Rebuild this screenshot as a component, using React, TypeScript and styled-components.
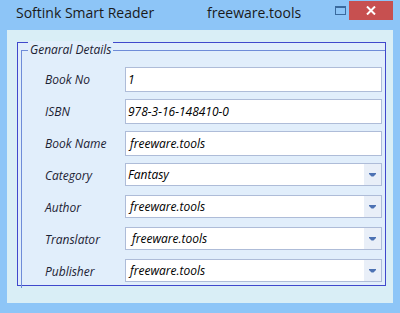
import React from "react";
import styled, { createGlobalStyle } from "styled-components";

type FieldProps = {
  label: string;
  value: string;
  combo?: boolean;
  indent?: number;
};

const fields: FieldProps[] = [
  { label: "Book No", value: "1" },
  { label: "ISBN", value: "978-3-16-148410-0" },
  { label: "Book Name", value: "freeware.tools", indent: 2 },
  { label: "Category", value: "Fantasy", combo: true },
  { label: "Author", value: "freeware.tools", combo: true, indent: 2 },
  { label: "Translator", value: "freeware.tools", combo: true, indent: 4 },
  { label: "Publisher", value: "freeware.tools", combo: true, indent: 2 },
];

export default function App(): JSX.Element {
  return (
    <>
      <GlobalStyle />
      <Window>
        <TitleBar>
          <Title>Softink Smart Reader</Title>
          <Title className="site">freeware.tools</Title>
          <MaxButton>
            <svg width="11" height="9" viewBox="0 0 11 9">
              <rect x="0.5" y="0.5" width="10" height="8" fill="none" stroke="#3a6a9e" />
              <rect x="0" y="0" width="11" height="2" fill="#3a6a9e" />
            </svg>
          </MaxButton>
          <CloseButton>
            <svg width="10" height="9" viewBox="0 0 10 9">
              <path d="M1 0.5 L9 8.5 M9 0.5 L1 8.5" stroke="#fff" strokeWidth="2" />
            </svg>
          </CloseButton>
        </TitleBar>
        <Client>
          <Panel>
            <Group>
              <Legend>Genaral Details</Legend>
              <FieldGrid>
                {fields.map((f) => (
                  <Field key={f.label} {...f} />
                ))}
              </FieldGrid>
            </Group>
          </Panel>
        </Client>
      </Window>
    </>
  );
}

const Field = ({ label, value, combo, indent = 0 }: FieldProps): JSX.Element => {
  return (
    <>
      <Label>{label}</Label>
      <Input $combo={combo}>
        <span style={{ paddingLeft: indent }}>{value}</span>
        {combo && (
          <DropButton>
            <svg width="7" height="4" viewBox="0 0 7 4">
              <path d="M0 0 H7 V1 L4.5 3.5 H2.5 L0 1 Z" fill="#4d72b3" />
            </svg>
          </DropButton>
        )}
      </Input>
    </>
  );
};

const GlobalStyle = createGlobalStyle`
  html, body {
    margin: 0;
    padding: 0;
    background: #8dc5f7;
  }
`;

const Window = styled.div`
  width: 400px;
  height: 313px;
  background: #8dc5f7;
  display: flex;
  flex-direction: column;
  overflow: hidden;
`;

const TitleBar = styled.div`
  height: 30px;
  display: flex;
  align-items: flex-start;
  padding-left: 16px;
  box-sizing: border-box;
`;

const Title = styled.div`
  font-family: "Open Sans", "Noto Sans", sans-serif;
  font-size: 14px;
  color: #1a1a1a;
  line-height: 20px;
  margin-top: 3px;
  width: 191px;

  &.site {
    width: auto;
    flex: 1;
  }
`;

const MaxButton = styled.div`
  width: 18px;
  height: 20px;
  display: flex;
  justify-content: center;
  padding-top: 6px;
  box-sizing: border-box;
`;

const CloseButton = styled.div`
  width: 44px;
  height: 19px;
  margin-top: 1px;
  margin-right: 7px;
  margin-left: 0px;
  background: #c75050;
  display: flex;
  align-items: center;
  justify-content: center;
`;

const Client = styled.div`
  margin: 0 7px;
  height: 273px;
  background: #d9eef6;
  padding: 12px 0 0 10px;
  box-sizing: border-box;
`;

const Panel = styled.div`
  width: 369px;
  height: 244px;
  border: 1px solid #4048cc;
  background: #e1eefb;
  box-sizing: border-box;
  padding: 7px 0 0 3px;
`;

const Group = styled.div`
  position: relative;
  height: 238px;
  border-top: 1px solid #6f8cd8;
  border-left: 1px solid #6f8cd8;
  box-sizing: border-box;
  padding: 16px 0 0 23px;
`;

const Legend = styled.span`
  position: absolute;
  top: -10px;
  left: 6px;
  padding: 0 2px 0 2px;
  background: #e1eefb;
  font-family: "Open Sans", "Noto Sans", sans-serif;
  font-style: italic;
  font-size: 12px;
  line-height: 18px;
  color: #1c2233;
`;

const FieldGrid = styled.div`
  display: grid;
  grid-template-columns: 80px 257px;
  grid-auto-rows: 32px;
`;

const Label = styled.div`
  font-family: "Open Sans", "Noto Sans", sans-serif;
  font-style: italic;
  font-size: 12px;
  line-height: 26px;
  color: #1c2233;
`;

const Input = styled.div<{ $combo?: boolean }>`
  height: ${(p) => (p.$combo ? "23px" : "25px")};
  border: 1px solid #aebcd8;
  background: #fff;
  box-sizing: border-box;
  display: flex;
  align-items: center;
  padding-left: 2px;
  font-family: "Open Sans", "Noto Sans", sans-serif;
  font-style: italic;
  font-size: 12px;
  color: #000;

  span {
    flex: 1;
    white-space: nowrap;
  }
`;

const DropButton = styled.div`
  width: 17px;
  align-self: stretch;
  background: #e9eff8;
  display: flex;
  align-items: center;
  justify-content: center;
  padding-top: 1px;
`;
